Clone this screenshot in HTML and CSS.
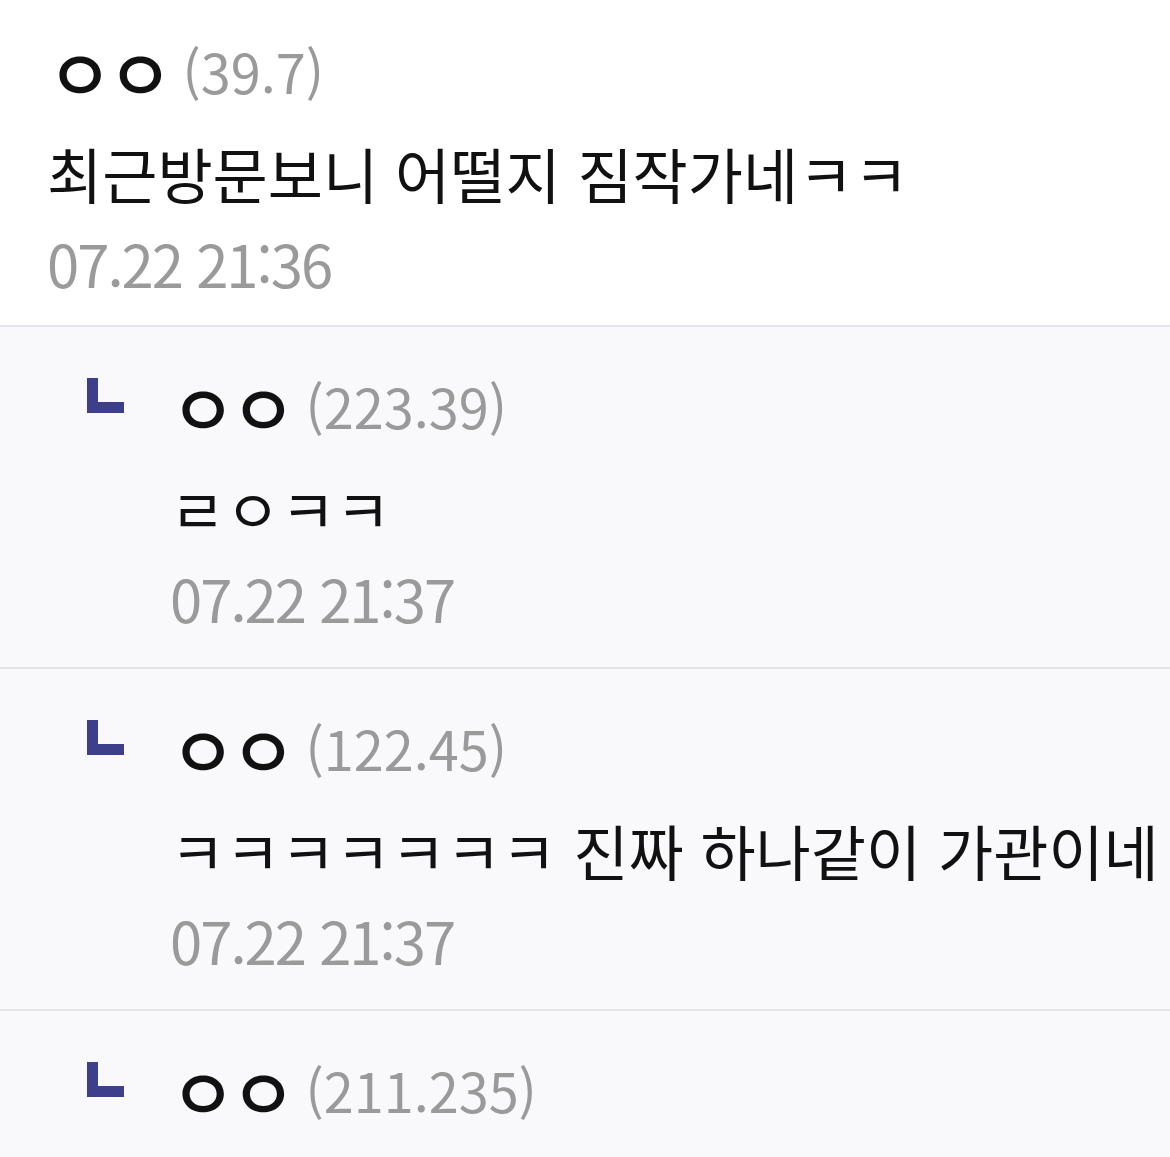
FILE: index.html
```html
<!DOCTYPE html>
<html lang="ko">
<head>
  <meta charset="UTF-8">
  <meta name="viewport" content="width=device-width, initial-scale=1.0">
  <title>댓글</title>
  <link rel="stylesheet" href="styles.css">
</head>
<body>
  <div class="comments">
    <div class="comment">
      <div class="name"><span class="nick">ㅇㅇ</span><span class="ip">(39.7)</span></div>
      <div class="text">최근방문보니 어떨지 짐작가네ㅋㅋ</div>
      <div class="date">07.22 21:36</div>
    </div>

    <div class="comment reply">
      <span class="arrow"></span>
      <div class="body">
        <div class="name"><span class="nick">ㅇㅇ</span><span class="ip">(223.39)</span></div>
        <div class="text">ㄹㅇㅋㅋ</div>
        <div class="date">07.22 21:37</div>
      </div>
    </div>

    <div class="comment reply">
      <span class="arrow"></span>
      <div class="body">
        <div class="name"><span class="nick">ㅇㅇ</span><span class="ip">(122.45)</span></div>
        <div class="text">ㅋㅋㅋㅋㅋㅋㅋ 진짜 하나같이 가관이네</div>
        <div class="date">07.22 21:37</div>
      </div>
    </div>

    <div class="comment reply">
      <span class="arrow"></span>
      <div class="body">
        <div class="name"><span class="nick">ㅇㅇ</span><span class="ip">(211.235)</span></div>
      </div>
    </div>
  </div>
</body>
</html>
```

FILE: styles.css
```css
body {
  margin: 0;
  padding: 0;
  background: #f9f9fb;
  font-family: 'Noto Sans CJK KR', 'Noto Sans', sans-serif;
  color: #111;
}
.comments {
  width: 1170px;
  overflow: hidden;
}
.comment {
  background: white;
  padding: 22px 0 27px 47px;
  border-bottom: 2px solid #e3e4e8;
}
.name {
  display: flex;
  align-items: center;
  height: 96px;
  white-space: nowrap;
}
.nick {
  font-size: 72px;
  font-weight: 500;
  letter-spacing: -6px;
}
.ip {
  margin-left: 15px;
  font-size: 54px;
  color: #9a9a9a;
}
.text {
  font-size: 60px;
  line-height: 110px;
  white-space: nowrap;
}
.date {
  font-size: 58px;
  line-height: 70px;
  letter-spacing: -2px;
  color: #9a9a9a;
}
.reply {
  display: flex;
  gap: 46px;
  background: #f9f9fb;
  padding: 30px 0 34px 87px;
}
.arrow {
  flex: none;
  width: 26px;
  height: 24px;
  margin-top: 21px;
  border-left: 11px solid #3d3f8a;
  border-bottom: 11px solid #3d3f8a;
}
```
